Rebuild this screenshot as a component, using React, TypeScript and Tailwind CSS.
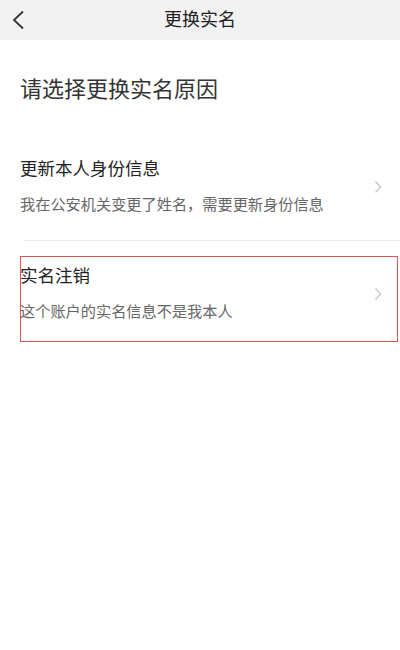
import type * as React from "react";

const font = { fontFamily: '"Noto Sans CJK SC", "Noto Sans", sans-serif' };

interface Reason {
  title: string;
  desc: string;
  marked?: boolean;
}

const reasons: Reason[] = [
  { title: "更新本人身份信息", desc: "我在公安机关变更了姓名，需要更新身份信息" },
  { title: "实名注销", desc: "这个账户的实名信息不是我本人", marked: true },
];

function Chevron(): React.JSX.Element {
  return (
    <svg width="8" height="14" viewBox="0 0 8 14" fill="none">
      <polyline points="1.5,1.5 6.5,7 1.5,12.5" stroke="#c9c9c9" strokeWidth="1.4" />
    </svg>
  );
}

function ReasonRow({ item }: { item: Reason }): React.JSX.Element {
  return (
    <div className="relative flex h-[106px] items-center pl-5 pr-[18px]">
      <div className="flex flex-1 flex-col gap-5 pb-[5px]">
        <div className="text-[17.5px] leading-[17px] text-[#222]">{item.title}</div>
        <div className="text-[15.2px] leading-[15px] text-[#666]">{item.desc}</div>
      </div>
      <Chevron />
      {item.marked && (
        <div className="absolute left-5 top-[15px] h-[86px] w-[378px] border border-[#e25555]" />
      )}
    </div>
  );
}

export default function App(): React.JSX.Element {
  return (
    <div className="min-h-[650px] w-[400px] bg-white" style={font}>
      <header className="grid h-10 grid-cols-[48px_1fr_48px] items-center bg-[#f2f2f2]">
        <div className="pl-3">
          <svg width="13" height="20" viewBox="0 0 13 20" fill="none">
            <polyline points="11,1.5 2,10 11,18.5" stroke="#333" strokeWidth="1.8" />
          </svg>
        </div>
        <h1 className="pb-[5px] text-center text-[18px] leading-[18px] text-[#222]">更换实名</h1>
        <div />
      </header>

      <h2 className="mt-[36px] pl-5 text-[22px] leading-[22px] text-[#333]">请选择更换实名原因</h2>

      <div className="mt-[36px]">
        <ReasonRow item={reasons[0]} />
        <div className="ml-6 h-px bg-[#ececec]" />
        <ReasonRow item={reasons[1]} />
      </div>
    </div>
  );
}
